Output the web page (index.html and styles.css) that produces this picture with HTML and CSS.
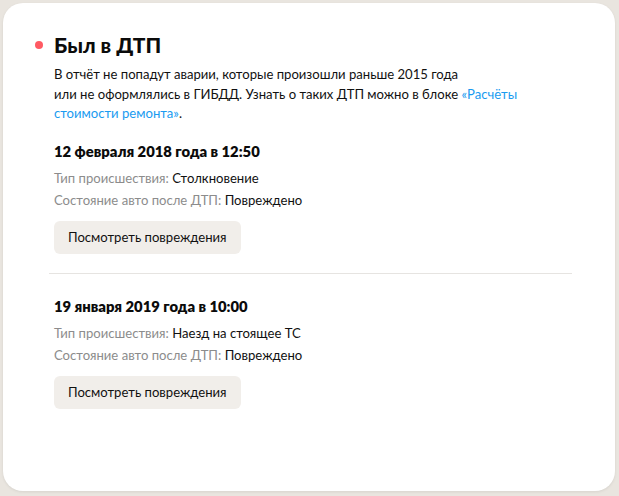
FILE: index.html
```html
<!DOCTYPE html>
<html lang="ru">
<head>
<meta charset="utf-8">
<link rel="stylesheet" href="styles.css">
</head>
<body>
<div class="card">
  <div class="head">
    <span class="dot"></span>
    <h1 class="title">Был в ДТП</h1>
  </div>
  <div class="content">
    <p class="intro">В отчёт не попадут аварии, которые произошли раньше 2015 года<br>или не оформлялись в ГИБДД. Узнать о таких ДТП можно в блоке <a class="link" href="#">«Расчёты<br>стоимости ремонта»</a>.</p>

    <div class="accident">
      <h2 class="date">12 февраля 2018 года в 12:50</h2>
      <p class="row"><span class="label">Тип происшествия:</span> Столкновение</p>
      <p class="row"><span class="label">Состояние авто после ДТП:</span> Повреждено</p>
      <button class="btn">Посмотреть повреждения</button>
    </div>
    <div class="divider"></div>
    <div class="accident accident-next">
      <h2 class="date">19 января 2019 года в 10:00</h2>
      <p class="row"><span class="label">Тип происшествия:</span> Наезд на стоящее ТС</p>
      <p class="row"><span class="label">Состояние авто после ДТП:</span> Повреждено</p>
      <button class="btn">Посмотреть повреждения</button>
    </div>
  </div>
</div>
</body>
</html>
```
FILE: styles.css
```css
* { box-sizing: border-box; }
html, body { margin: 0; padding: 0; }
body {
  background: #e9e5df;
  font-family: Lato, "Open Sans", sans-serif;
  color: #111;
  width: 619px;
  height: 496px;
  overflow: hidden;
}
.card {
  margin: 3px 0 0 3px;
  width: 612px;
  height: 488px;
  background: #fff;
  border-radius: 20px;
  box-shadow: 0 1px 3px rgba(0,0,0,0.08);
  padding: 28px 0 0 32px;
}
.head {
  display: flex;
  align-items: center;
  gap: 11px;
}
.dot {
  width: 8px;
  height: 8px;
  border-radius: 50%;
  background: #ff5a63;
  flex: none;
}
.title {
  margin: 0;
  font-size: 21px;
  line-height: 28px;
  font-weight: 900;
  color: #0b0b0b;
}
.content {
  padding-left: 19px;
  width: 569px;
}
.intro {
  margin: 6px 0 0;
  font-size: 13.1px;
  line-height: 19.5px;
  color: #111;
}
.link { color: #1a9bf0; text-decoration: none; }
.accident { padding-top: 16px; }
.accident-next { padding-top: 21px; }
.date {
  margin: 0 0 5px;
  font-size: 14.8px;
  line-height: 22px;
  font-weight: 800;
  color: #0b0b0b;
}
.row {
  margin: 0;
  font-size: 13.1px;
  line-height: 22px;
  color: #111;
}
.label { color: #8c8c8c; }
.btn {
  display: block;
  margin-top: 10px;
  height: 33px;
  padding: 0 14px;
  border: none;
  border-radius: 6px;
  background: #f1eeea;
  font-family: inherit;
  font-size: 13.1px;
  color: #111;
}
.divider {
  margin: 19px 0 0 -5px;
  height: 1px;
  background: #e6e4e1;
  width: 523px;
}
```
